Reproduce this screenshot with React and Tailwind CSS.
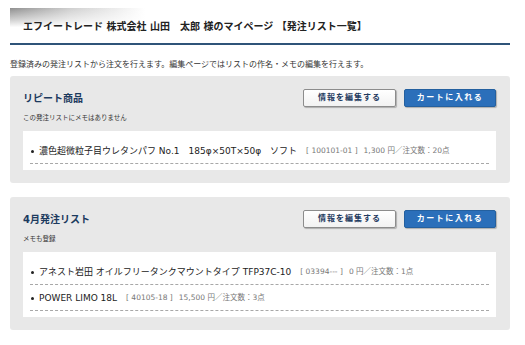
import React from "react";

const FONT = { fontFamily: '"DejaVu Sans", "Noto Sans CJK JP", sans-serif' };

function Buttons() {
  return (
    <div className="flex gap-[8px]">
      <button className="w-[93px] h-[18px] bg-gradient-to-b from-white to-[#f2f2f2] border border-[#8c8c8c] rounded-[2px] shadow-[1px_1px_1px_rgba(0,0,0,0.25)] text-[#1e3a5f] text-[8px] font-bold tracking-[1px] flex items-center justify-center">
        情報を編集する
      </button>
      <button className="w-[92px] h-[18px] bg-[#2b6fba] border border-[#24609f] rounded-[2px] shadow-[1px_1px_1px_rgba(0,0,0,0.25)] text-white text-[8px] font-bold tracking-[1.5px] flex items-center justify-center">
        カートに入れる
      </button>
    </div>
  );
}

function Item({ name, code, price }) {
  return (
    <div className="flex items-center pt-[7px] pb-[6px] border-b border-dashed border-[#a8a8a8]">
      <span className="w-[3px] h-[3px] rounded-full bg-[#222] ml-[1px] mr-[5px]" />
      <span className="text-[9px] text-[#222] leading-[12px] whitespace-pre">{name}</span>
      <span className="text-[7.5px] text-[#777] leading-[12px] ml-[9px] whitespace-pre">{`[ ${code} ]`}</span>
      <span className="text-[7.5px] text-[#777] leading-[12px] ml-[6px] whitespace-pre">{price}</span>
    </div>
  );
}

function Panel({ title, memo, items }) {
  return (
    <div className="bg-[#e8e8e8] rounded-[3px] pt-[13px] pb-[13px] pl-[13px] pr-[14px]">
      <div className="flex items-center justify-between">
        <div className="text-[10px] font-bold text-[#1c3a5e]">{title}</div>
        <Buttons />
      </div>
      <div className="text-[6.5px] text-[#333] mt-[7px] leading-[8px]">{memo}</div>
      <div className="bg-white mt-[9px] px-[7px] pt-[7px] pb-[6px]">
        {items.map((it, i) => (
          <Item key={i} {...it} />
        ))}
      </div>
    </div>
  );
}

export default function App() {
  return (
    <div className="w-[525px] h-[345px] bg-white pl-[10px] pr-[15px] pt-[8px] overflow-hidden" style={FONT}>
      <div className="h-[37px] border-b-2 border-[#2f5479] bg-[linear-gradient(to_bottom,rgba(255,255,255,0)_0%,rgba(255,255,255,0.6)_35%,#fff_55%),linear-gradient(to_right,#8f8f8f_0%,#cfcfcf_12%,#fff_27%)] flex items-center pl-[13px] pt-[2px]">
        <span className="text-[10px] font-bold text-[#222] whitespace-pre">
          エフイートレード 株式会社 山田　太郎 様のマイページ 【発注リスト一覧】
        </span>
      </div>
      <div className="text-[8px] text-[#333] mt-[15px] leading-[10px] whitespace-nowrap">
        登録済みの発注リストから注文を行えます。編集ページではリストの作名・メモの編集を行えます。
      </div>
      <div className="mt-[6px]">
        <Panel
          title="リピート商品"
          memo="この発注リストにメモはありません"
          items={[
            {
              name: "濃色超微粒子目ウレタンパフ No.1　185φ×50T×50φ　ソフト",
              code: "100101-01",
              price: "1,300 円／注文数：20点",
            },
          ]}
        />
      </div>
      <div className="mt-[14px]">
        <Panel
          title="4月発注リスト"
          memo="メモも登録"
          items={[
            {
              name: "アネスト岩田 オイルフリータンクマウントタイプ TFP37C-10",
              code: "03394---",
              price: "0 円／注文数：1点",
            },
            {
              name: "POWER LIMO 18L",
              code: "40105-18",
              price: "15,500 円／注文数：3点",
            },
          ]}
        />
      </div>
    </div>
  );
}
